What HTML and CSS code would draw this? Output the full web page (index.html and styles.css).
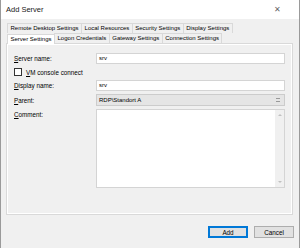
FILE: index.html
```html
<!DOCTYPE html>
<html lang="en">
<head>
    <meta charset="UTF-8">
    <title>Add Server</title>
    <link rel="stylesheet" href="styles.css">
</head>
<body>
    <div class="window">
        <div class="titlebar">
            <span class="title">Add Server</span>
            <span class="close">&#x2715;</span>
        </div>
        <div class="content">
            <div class="tabs">
                <div class="tab-row">
                    <div class="tab">Remote Desktop Settings</div>
                    <div class="tab">Local Resources</div>
                    <div class="tab">Security Settings</div>
                    <div class="tab">Display Settings</div>
                </div>
                <div class="tab-row">
                    <div class="tab active">Server Settings</div>
                    <div class="tab">Logon Credentials</div>
                    <div class="tab">Gateway Settings</div>
                    <div class="tab">Connection Settings</div>
                </div>
            </div>
            <div class="panel">
                <div class="form">
                    <label class="label"><u>S</u>erver name:</label>
                    <div class="field">srv</div>

                    <div class="check-row">
                        <span class="checkbox"></span>
                        <span><u>V</u>M console connect</span>
                    </div>

                    <label class="label"><u>D</u>isplay name:</label>
                    <div class="field">srv</div>

                    <label class="label"><u>P</u>arent:</label>
                    <div class="field combo">
                        <span>RDP\Standort A</span>
                        <span class="combo-arrow"></span>
                    </div>

                    <label class="label top"><u>C</u>omment:</label>
                    <div class="field memo">
                        <div class="scrollbar">
                            <span class="arrow up"></span>
                            <span class="arrow down"></span>
                        </div>
                    </div>
                </div>
            </div>
            <div class="buttons">
                <button class="btn default">Add</button>
                <button class="btn">Cancel</button>
            </div>
        </div>
    </div>
</body>
</html>
```

FILE: styles.css
```css
body {
    margin: 0;
    font-family: "Liberation Sans", Arial, sans-serif;
    font-size: 6.3px;
    color: #000;
}
.window {
    width: 300px;
    height: 248px;
    box-sizing: border-box;
    border-left: 1px solid #9a9a9a;
    border-right: 1px solid #9a9a9a;
    background: #f0f0f0;
    display: flex;
    flex-direction: column;
}
.titlebar {
    height: 19px;
    background: #fff;
    display: flex;
    align-items: center;
    justify-content: space-between;
    padding: 0 18px 0 5px;
}
.title {
    font-size: 7.5px;
    color: #222;
}
.close {
    font-size: 8px;
    color: #666;
}
.content {
    flex: 1;
    padding: 4px 5px 0 5px;
    display: flex;
    flex-direction: column;
}
.tabs {
    padding-left: 1px;
}
.tab-row {
    display: flex;
    height: 10px;
}
.tab {
    border: 1px solid #d9d9d9;
    border-bottom: none;
    margin-right: -1px;
    padding: 0 2.5px;
    font-size: 6px;
    line-height: 9px;
    background: #f0f0f0;
}
.tab.active {
    background: #fff;
    position: relative;
    top: 1px;
    z-index: 1;
}
.panel {
    height: 172px;
    width: 287px;
    box-sizing: border-box;
    border: 1px solid #d9d9d9;
    box-shadow: inset 0 0 0 1px #fff;
    padding: 9px 8px 0 7px;
}
.form {
    display: grid;
    grid-template-columns: 82px 189px;
    row-gap: 3px;
    align-items: center;
}
.label.top {
    align-self: start;
    padding-top: 2px;
}
.field {
    height: 11px;
    box-sizing: border-box;
    background: #fff;
    border: 1px solid #d4d4d4;
    padding: 0 2px;
    line-height: 9px;
    font-size: 6px;
}
.check-row {
    grid-column: 1 / 3;
    display: flex;
    align-items: center;
    gap: 4px;
    height: 10px;
}
.checkbox {
    width: 6px;
    height: 6px;
    border: 1px solid #333;
    background: #fff;
}
.combo {
    height: 12px;
    background: #e5e5e5;
    border-color: #cccccc;
    display: flex;
    align-items: center;
    justify-content: space-between;
    padding: 0 4px 0 2px;
}
.combo-arrow {
    width: 4px;
    height: 2px;
    border-top: 1px solid #999;
    border-bottom: 1px solid #999;
}
.memo {
    height: 79px;
    align-self: start;
    display: flex;
    justify-content: flex-end;
    padding: 0;
}
.scrollbar {
    width: 9px;
    background: #f0f0f0;
    display: flex;
    flex-direction: column;
    justify-content: space-between;
    align-items: center;
    padding: 4px 0;
}
.arrow {
    width: 0;
    height: 0;
    border-left: 2px solid transparent;
    border-right: 2px solid transparent;
}
.arrow.up {
    border-bottom: 2px solid #c0c0c0;
}
.arrow.down {
    border-top: 2px solid #c0c0c0;
}
.buttons {
    display: flex;
    justify-content: flex-end;
    gap: 6px;
    padding: 11px 0 0 0;
}
.btn {
    width: 40px;
    height: 12px;
    font-family: inherit;
    font-size: 6.3px;
    padding: 0;
    background: #e1e1e1;
    border: 1px solid #adadad;
}
.btn.default {
    border: 1px solid #0078d7;
    box-shadow: inset 0 0 0 1px #0078d7;
}
```
